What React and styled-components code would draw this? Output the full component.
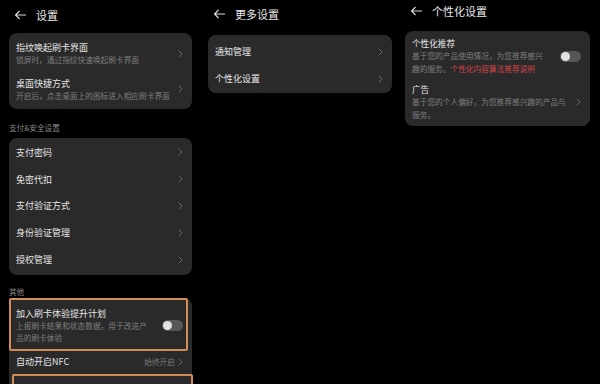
import React from 'react';
import styled, { createGlobalStyle } from 'styled-components';

const GlobalStyle = createGlobalStyle`
  html, body {
    margin: 0;
    padding: 0;
    background: #000;
  }
  body {
    font-family: "Noto Sans CJK SC", "Noto Sans", sans-serif;
    -webkit-font-smoothing: antialiased;
  }
`;

const Page = styled.div`
  display: flex;
  width: 600px;
  height: 384px;
  overflow: hidden;
  background: #000;
`;

const Screen = styled.div`
  width: 200px;
  flex: none;
  box-sizing: border-box;
  padding: ${p => p.$pad};
  display: flex;
  flex-direction: column;
  & > * {
    flex: none;
  }
`;

const Header = styled.div`
  display: flex;
  align-items: flex-start;
  gap: 9px;
  box-sizing: border-box;
  height: ${p => p.$h}px;
  padding-top: ${p => p.$top}px;
  padding-left: ${p => p.$indent}px;
  color: #e8e8e8;
  font-size: 11px;
  line-height: 14px;
  svg {
    margin-top: 2px;
  }
`;

const Card = styled.div`
  background: #2a2a2a;
  border-radius: 8px;
  padding: ${p => p.$pad || '3px 0 2px'};
`;

const Row = styled.div`
  display: flex;
  align-items: center;
  box-sizing: border-box;
  min-height: ${p => p.$h || 0}px;
  padding: ${p => p.$pad || '5px 9px 5px 7px'};
  gap: 8px;
`;

const Highlight = styled(Row)`
  border: 2px solid #d38c56;
  border-radius: 2px;
  margin-right: 4px;
  padding: 7px 3px 4px 5px;
  margin-top: -3px;
`;

const Texts = styled.div`
  flex: 1;
  min-width: 0;
`;

const Title = styled.div`
  color: #e6e6e6;
  font-size: ${p => p.$fs || 9}px;
  line-height: 13px;
  white-space: nowrap;
`;

const Sub = styled.div`
  color: #7e7e7e;
  font-size: 7.7px;
  line-height: 12.5px;
`;

const Link = styled.span`
  color: #d0444a;
`;

const Label = styled.div`
  color: #8a8a8a;
  font-size: 7.6px;
  line-height: 10px;
  padding: ${p => p.$pad};
`;

const Value = styled.span`
  color: #7a7a7a;
  font-size: 7.7px;
`;

const Right = styled.div`
  display: flex;
  align-items: center;
  gap: 3px;
  flex: none;
`;

const Toggle = styled.div`
  width: 21px;
  height: 11px;
  border-radius: 6px;
  background: #575757;
  position: relative;
  flex: none;
  &::after {
    content: '';
    position: absolute;
    left: 1px;
    top: 1px;
    width: 9px;
    height: 9px;
    border-radius: 50%;
    background: #e2e2e2;
  }
`;

const Chevron = () => (
  <svg width="5" height="8" viewBox="0 0 5 8" style={{ flex: 'none' }}>
    <path d="M0.8 0.8 L4 4 L0.8 7.2" fill="none" stroke="#6e6e6e" strokeWidth="0.9" />
  </svg>
);

const Back = () => (
  <svg width="13" height="10" viewBox="0 0 13 10">
    <path d="M12 5 H1.5 M5.5 1 L1.5 5 L5.5 9" fill="none" stroke="#dcdcdc" strokeWidth="1.1" />
  </svg>
);

const NavRow = ({ title, sub, h, pad, fs }) => (
  <Row $h={h} $pad={pad}>
    <Texts>
      <Title $fs={fs}>{title}</Title>
      {sub && <Sub>{sub}</Sub>}
    </Texts>
    <Chevron />
  </Row>
);

export default function App() {
  return (
    <>
      <GlobalStyle />
      <Page>
        <Screen $pad="0 8px 0 9px">
          <Header $h={33} $top={8} $indent={5}>
            <Back />
            <span>设置</span>
          </Header>
          <Card $pad="3px 0 2px">
            <NavRow title="指纹唤起刷卡界面" sub="锁屏时，通过指纹快速唤起刷卡界面" h={35} />
            <NavRow title="桌面快捷方式" sub="开启后，点击桌面上的图标进入相应刷卡界面" h={35} />
          </Card>
          <Label $pad="14px 0 5px">支付&amp;安全设置</Label>
          <Card $pad="1px 0 2px">
            <NavRow title="支付密码" h={26.8} />
            <NavRow title="免密代扣" h={26.8} />
            <NavRow title="支付验证方式" h={26.8} />
            <NavRow title="身份验证管理" h={26.8} />
            <NavRow title="授权管理" h={26.8} />
          </Card>
          <Label $pad="12px 0 1px">其他</Label>
          <Card $pad="3px 0 0">
            <Highlight>
              <Texts>
                <Title>加入刷卡体验提升计划</Title>
                <Sub>上报刷卡结果和状态数据，用于改进产<br />品的刷卡体验</Sub>
              </Texts>
              <Toggle />
            </Highlight>
            <Row $h={22} $pad="0 9px 0 7px">
              <Texts>
                <Title>自动开启NFC</Title>
              </Texts>
              <Right>
                <Value>始终开启</Value>
                <Chevron />
              </Right>
            </Row>
            <Highlight style={{ marginLeft: 3, marginRight: -1, marginTop: 1, height: 20 }} />
          </Card>
        </Screen>
        <Screen $pad="0 8px 0 8px">
          <Header $h={35} $top={7} $indent={5}>
            <Back />
            <span>更多设置</span>
          </Header>
          <Card $pad="3px 0 1px">
            <NavRow title="通知管理" h={27} />
            <NavRow title="个性化设置" h={27} />
          </Card>
        </Screen>
        <Screen $pad="0 10px 0 5px">
          <Header $h={31} $top={4} $indent={5}>
            <Back />
            <span>个性化设置</span>
          </Header>
          <Card $pad="2px 0 1px">
            <Row $pad="4px 9px 4px 7px">
              <Texts>
                <Title $fs={8.6}>个性化推荐</Title>
                <Sub>基于您的产品使用情况，为您推荐感兴<br />趣的服务。<Link>个性化内容算法推荐说明</Link></Sub>
              </Texts>
              <Toggle />
            </Row>
            <Row $pad="4px 9px 4px 7px">
              <Texts>
                <Title $fs={8.6}>广告</Title>
                <Sub>基于您的个人偏好，为您推荐感兴趣的产品与<br />服务。</Sub>
              </Texts>
              <Chevron />
            </Row>
          </Card>
        </Screen>
      </Page>
    </>
  );
}
